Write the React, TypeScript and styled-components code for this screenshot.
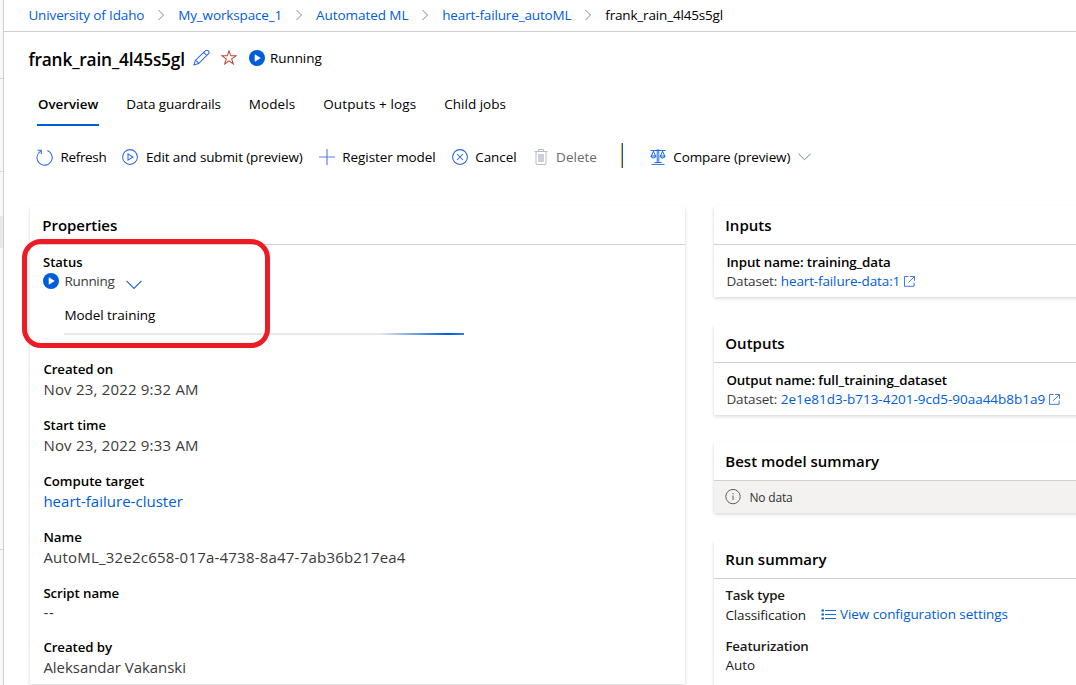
import React from "react";
import styled, { createGlobalStyle } from "styled-components";

const blue = "#015cda";

const GlobalStyle = createGlobalStyle`
  * { box-sizing: border-box; }
  html, body { margin: 0; padding: 0; background: #fff; overflow: hidden; }
  body { font-family: "Open Sans", "Noto Sans", sans-serif; font-size: 13.5px; color: #000; }
  svg { display: block; flex: none; }
  a { color: ${blue}; text-decoration: none; }
`;

const Shell = styled.div`
  display: flex;
  width: 1076px;
  height: 685px;
  overflow: hidden;
`;

const NavEdge = styled.aside`
  display: flex;
  flex-direction: column;
  flex: none;
  width: 4px;
  border-right: 1px solid #d2d0ce;
  background: #faf9f8;
`;
const NavSection = styled.div<{ $height: number }>`
  flex: none;
  height: ${(p) => p.$height}px;
  border-bottom: 1px solid #d8d6d4;
`;
const NavGap = styled.div`height: 44px; flex: none;`;
const NavSelected = styled.div`height: 32px; flex: none; background: #e9e8e7;`;
const NavRest = styled.div`height: 302px; flex: none; border-bottom: 1px solid #d8d6d4;`;

const Main = styled.main`
  flex: 1;
  min-width: 0;
  display: flex;
  flex-direction: column;
  position: relative;
`;

const Label = styled.span<{ $ls?: number }>`
  letter-spacing: ${(p) => p.$ls ?? 0}px;
  white-space: nowrap;
`;

const Breadcrumbs = styled.nav`
  display: flex;
  align-items: center;
  height: 32px;
  flex: none;
  padding: 0 0 2px 24.4px;
  border-bottom: 1px solid #d2d0ce;
`;
const Separator = styled.span`
  width: 33.8px;
  display: flex;
  justify-content: center;
`;

const TitleRow = styled.header`
  display: flex;
  align-items: center;
  height: 52px;
  flex: none;
  padding-left: 24px;
`;
const Title = styled.h1`
  margin: 3px 8.5px 0 0;
  width: 156.5px;
  font-size: 17.3px;
  line-height: 24px;
  font-weight: 600;
  letter-spacing: -0.17px;
  text-indent: 0.4px;
  white-space: nowrap;
`;
const StarSlot = styled.span`margin: 0 11.5px 0 11px;`;
const RunState = styled.span`
  display: flex;
  align-items: center;
  gap: 5.4px;
`;

const Tabs = styled.div`
  display: flex;
  gap: 28px;
  height: 42px;
  flex: none;
  padding-left: 34px;
`;
const Tab = styled.div<{ $active?: boolean }>`
  height: 42px;
  line-height: 40px;
  margin: 0 ${(p) => (p.$active ? "-1px" : 0)};
  padding: 0 ${(p) => (p.$active ? "1px" : 0)};
  font-weight: ${(p) => (p.$active ? 600 : 400)};
  font-size: ${(p) => (p.$active ? 13.3 : 13.5)}px;
  border-bottom: 2px solid ${(p) => (p.$active ? blue : "transparent")};
`;

const Toolbar = styled.div`
  display: flex;
  align-items: center;
  gap: 16.1px;
  height: 62px;
  flex: none;
  padding-left: 32px;
`;
const Command = styled.div<{ $disabled?: boolean }>`
  display: flex;
  align-items: center;
  gap: 7.5px;
  color: ${(p) => (p.$disabled ? "#6b6967" : "#000")};
`;
const Divider = styled.div`
  display: flex;
  height: 25px;
  margin: -3px 10.3px 0 8.5px;
  &::before, &::after { content: ""; width: 1px; background: #f0a850; }
  &::after { background: #12599c; }
`;

const Columns = styled.div`
  display: flex;
  gap: 29px;
  padding: 18px 0 0 26px;
`;
const Column = styled.div<{ $width: number }>`
  width: ${(p) => p.$width}px;
  flex: none;
  display: flex;
  flex-direction: column;
  gap: 27px;
`;
const Card = styled.section<{ $height?: number }>`
  height: ${(p) => (p.$height ? p.$height + "px" : "auto")};
  background: #fff;
  box-shadow: 0 1.6px 3.6px rgba(0, 0, 0, 0.16), 0 0.3px 0.9px rgba(0, 0, 0, 0.14);
`;
const CardTitle = styled.h2<{ $ls?: number; $inset?: number }>`
  margin: 0;
  height: 39px;
  padding-left: ${(p) => p.$inset ?? 11.3}px;
  font-size: 15px;
  line-height: 38px;
  font-weight: 600;
  letter-spacing: ${(p) => p.$ls ?? 0}px;
  border-bottom: 1px solid #d2d0ce;
`;
const Properties = styled.div`
  display: flex;
  flex-direction: column;
  padding: 8px 13px 0;
`;
const Name = styled.div<{ $ls?: number; $size?: number }>`
  font-size: ${(p) => p.$size ?? 13.3}px;
  line-height: 18px;
  font-weight: 600;
  letter-spacing: ${(p) => p.$ls ?? 0}px;
  white-space: nowrap;
`;
const StatusLine = styled.div`
  display: flex;
  align-items: center;
  height: 20px;
  gap: 5.4px;
  color: #3b3a39;
`;
const ExpandIcon = styled.span`margin: 8px 0 0 6.5px;`;
const Training = styled.div`
  margin: 14px 0 25px 21px;
  width: 400px;
  line-height: 20px;
  text-indent: 0.4px;
`;
const Track = styled.div`
  margin-top: 8px;
  height: 2px;
  background: linear-gradient(90deg, #e8e8e8 79%, ${blue} 96%, #3a7fe0 100%);
`;
const Field = styled.div<{ $short?: boolean }>`
  display: flex;
  flex-direction: column;
  margin-bottom: 16px;
  padding-left: 0.4px;
  > :last-child { line-height: ${(p) => (p.$short ? 20 : 22)}px; }
`;
const Value = styled.div<{ $ls?: number }>`
  font-size: 15px;
  color: #3b3a39;
  letter-spacing: ${(p) => p.$ls ?? 0}px;
  white-space: nowrap;
`;

const DataBody = styled.div`padding: 8px 0 6px 12.4px;`;
const DatasetLine = styled.div`
  display: flex;
  align-items: center;
  height: 20px;
  color: #3b3a39;
  > a { margin: 0 4.2px 0 3.6px; }
`;
const EmptyBar = styled.div`
  display: flex;
  align-items: center;
  height: 32px;
  padding-left: 11px;
  gap: 8.5px;
  background: #f3f2f1;
  color: #323130;
  font-size: 12px;
`;
const RunBody = styled.div`padding: 7px 0 0 11.4px;`;
const RunField = styled.div<{ $h: number }>`
  margin-bottom: 11px;
  color: #1b1a19;
  > :last-child {
    display: flex;
    align-items: center;
    height: ${(p) => p.$h}px;
  }
`;
const ConfigLink = styled.a`
  display: flex;
  align-items: center;
  gap: 3.6px;
  margin: -2px 0 0 15.5px;
`;

const Highlight = styled.div`
  position: absolute;
  left: 18px;
  top: 239px;
  width: 248px;
  height: 109px;
  border: 5px solid #ed1c24;
  border-radius: 19px;
`;

const Chevron = () => (
  <svg width="8" height="12" viewBox="0 0 8 12" fill="none" stroke="#8a8886">
    <path d="M1.5 1l5 5-5 5" />
  </svg>
);
const PlayFilled = () => (
  <svg width="16" height="16" viewBox="0 0 16 16">
    <circle cx="8" cy="8" r="8" fill={blue} />
    <path d="M6 4.7v6.6L11.3 8z" fill="#fff" stroke="#fff" strokeWidth=".6" strokeLinejoin="round" />
  </svg>
);
const Pencil = () => (
  <svg width="17" height="17" viewBox="0 0 17 17" fill="none" stroke="#2f6bdc" strokeWidth="1.05" strokeLinejoin="round">
    <path d="M.9 15.1l1.5-4.7L12.3 .9a2.1 2.1 0 0 1 3 3L5.6 13.6zM2.4 10.4a4 4 0 0 1 3.2 3.2M10.7 2.4l3.1 3.1" />
  </svg>
);
const Star = () => (
  <svg width="16" height="16" viewBox="0 0 16 16" fill="none" stroke="#c2453b" strokeWidth="1.05">
    <path d="M8 .9l1.7 4.9h5.2l-4.2 3.1 1.6 5L8 10.8l-4.3 3.1 1.6-5L1.1 5.8h5.2z" />
  </svg>
);
const RefreshIcon = () => (
  <svg width="17" height="17" viewBox="0 0 17 17" fill="none" stroke="#2f6bdc" strokeWidth="1.05">
    <path d="M11.4 1.5A7.6 7.6 0 1 1 4.6 2.1M1.6 1.3h3.7V5" />
  </svg>
);
const PlayOutline = () => (
  <svg width="16" height="16" viewBox="0 0 16 16" fill="none" stroke="#2f6bdc" strokeWidth="1.05">
    <circle cx="8" cy="8" r="7.4" />
    <path d="M6 4.9v6.2L11 8z" />
  </svg>
);
const Plus = () => (
  <svg width="16" height="16" viewBox="0 0 16 16" fill="none" stroke="#5b83e4" strokeWidth="1.2">
    <path d="M8 0v16M0 8h16" />
  </svg>
);
const CancelIcon = () => (
  <svg width="16" height="16" viewBox="0 0 16 16" fill="none" stroke="#2563d9" strokeWidth="1.05">
    <circle cx="8" cy="8" r="7.4" />
    <path d="M5 5l6 6M11 5l-6 6" />
  </svg>
);
const Trash = () => (
  <svg width="16" height="16" viewBox="0 0 16 16" fill="none" stroke="#bdbbb9">
    <path d="M1.5 2.5h13M5.5 2.5v-2h5v2M3 2.5v12q0 1 1 1h8q1 0 1-1v-12" />
    <path d="M5 5h6v8H5z" fill="#c9d0da" stroke="none" />
  </svg>
);
const Scales = () => (
  <svg width="16" height="16" viewBox="0 0 16 16" fill="none" stroke={blue}>
    <path d="M.5 1.5h15M7.2 .3v13M8.8 .3v13M4.5 13.5h7M1.5 15.4h13" strokeWidth=".85" />
    <path d="M3.4 2.2L1.3 7M3.4 2.2L5.5 7M12.6 2.2L10.5 7M12.6 2.2L14.7 7" strokeWidth=".9" />
    <path d="M.8 7h5.2q-.4 2-2.6 2T.8 7zM10 7h5.2q-.4 2-2.6 2T10 7z" strokeWidth=".95" />
  </svg>
);
const ChevronDown = ({ width = 13, color = "#5f84b5" }: { width?: number; color?: string }) => (
  <svg width={width} height={width * 0.6} viewBox="0 0 15 9" fill="none" stroke={color} strokeWidth="1.15">
    <path d="M.5 .8l7 7 7-7" />
  </svg>
);
const External = () => (
  <svg width="11" height="11" viewBox="0 0 11 11" fill="none" stroke="#3672dd">
    <path d="M4.5 .5H.5v9.8h9.6V6.5M6.2 .5h4.3v4.3M10.3 .7L4.3 6.7" strokeWidth=".95" />
  </svg>
);
const Info = () => (
  <svg width="16" height="16" viewBox="0 0 16 16" fill="none" stroke="#605e5c">
    <circle cx="8" cy="7.6" r="7.2" />
    <path d="M8 6.5v4.6M8 4v1.2" />
  </svg>
);
const List = () => (
  <svg width="15" height="12" viewBox="0 0 15 12" fill="none" stroke={blue}>
    <path d="M4 2.5h11M4 6.5h11M4 10.5h11" strokeWidth=".9" />
    <path d="M.5 2.5h2.4M.5 6.5h2.4M.5 10.5h2.4" strokeWidth="2" />
  </svg>
);

const crumbs = [
  { text: "University of Idaho", ls: -0.13 },
  { text: "My_workspace_1", ls: -0.13 },
  { text: "Automated ML", ls: -0.06 },
  { text: "heart-failure_autoML", ls: -0.14 },
];
const tabs = [
  { text: "Overview", ls: 0, active: true },
  { text: "Data guardrails", ls: -0.12 },
  { text: "Models", ls: 0.08 },
  { text: "Outputs + logs", ls: 0.12 },
  { text: "Child jobs", ls: 0 },
];
const commands = [
  { text: "Refresh", ls: -0.35, icon: <RefreshIcon /> },
  { text: "Edit and submit (preview)", ls: -0.12, icon: <PlayOutline /> },
  { text: "Register model", ls: -0.07, icon: <Plus /> },
  { text: "Cancel", ls: -0.08, icon: <CancelIcon /> },
  { text: "Delete", ls: 0, icon: <Trash />, disabled: true },
];

export default function App() {
  return (
    <>
      <GlobalStyle />
      <Shell>
        <NavEdge>
          <NavSection $height={79} />
          <NavSection $height={93} />
          <NavGap />
          <NavSelected />
          <NavRest />
        </NavEdge>
        <Main>
          <Breadcrumbs>
            {crumbs.map((c) => (
              <React.Fragment key={c.text}>
                <a><Label $ls={c.ls}>{c.text}</Label></a>
                <Separator><Chevron /></Separator>
              </React.Fragment>
            ))}
            <Label $ls={-0.17}>frank_rain_4l45s5gl</Label>
          </Breadcrumbs>
          <TitleRow>
            <Title>frank_rain_4l45s5gl</Title>
            <Pencil />
            <StarSlot><Star /></StarSlot>
            <RunState><PlayFilled /><Label $ls={-0.05}>Running</Label></RunState>
          </TitleRow>
          <Tabs>
            {tabs.map((t) => (
              <Tab key={t.text} $active={t.active}><Label $ls={t.ls}>{t.text}</Label></Tab>
            ))}
          </Tabs>
          <Toolbar>
            {commands.map((c) => (
              <Command key={c.text} $disabled={c.disabled}>
                {c.icon}
                <Label $ls={c.ls}>{c.text}</Label>
              </Command>
            ))}
            <Divider />
            <Command>
              <Scales />
              <Label $ls={-0.12}>Compare (preview)</Label>
              <ChevronDown />
            </Command>
          </Toolbar>
          <Columns>
            <Column $width={655}>
              <Card $height={478}>
                <CardTitle $inset={12.3} $ls={-0.05}>Properties</CardTitle>
                <Properties>
                  <Name $size={13}>Status</Name>
                  <StatusLine>
                    <PlayFilled />
                    <Label $ls={-0.3}>Running</Label>
                    <ExpandIcon><ChevronDown width={16} color="#2563d9" /></ExpandIcon>
                  </StatusLine>
                  <Training>
                    <Label $ls={-0.05}>Model training</Label>
                    <Track />
                  </Training>
                  <Field><Name $ls={-0.1}>Created on</Name><Value $ls={0.2}>Nov 23, 2022 9:32 AM</Value></Field>
                  <Field><Name $size={13}>Start time</Name><Value $ls={0.2}>Nov 23, 2022 9:33 AM</Value></Field>
                  <Field><Name $ls={-0.04}>Compute target</Name><Value $ls={0.02}><a>heart-failure-cluster</a></Value></Field>
                  <Field><Name>Name</Name><Value $ls={0.21}>AutoML_32e2c658-017a-4738-8a47-7ab36b217ea4</Value></Field>
                  <Field $short><Name $ls={-0.1}>Script name</Name><Value $ls={0.8}>--</Value></Field>
                  <Field><Name $ls={-0.1}>Created by</Name><Value $ls={-0.04}>Aleksandar Vakanski</Value></Field>
                </Properties>
              </Card>
            </Column>
            <Column $width={380}>
              <Card>
                <CardTitle>Inputs</CardTitle>
                <DataBody>
                  <Name $ls={-0.09}>Input name: training_data</Name>
                  <DatasetLine>
                    <Label $ls={-0.15}>Dataset:</Label>
                    <a><Label $ls={-0.13}>heart-failure-data:1</Label></a>
                    <External />
                  </DatasetLine>
                </DataBody>
              </Card>
              <Card>
                <CardTitle>Outputs</CardTitle>
                <DataBody>
                  <Name $ls={-0.1}>Output name: full_training_dataset</Name>
                  <DatasetLine>
                    <Label $ls={-0.15}>Dataset:</Label>
                    <a><Label $ls={-0.015}>2e1e81d3-b713-4201-9cd5-90aa44b8b1a9</Label></a>
                    <External />
                  </DatasetLine>
                </DataBody>
              </Card>
              <Card>
                <CardTitle>Best model summary</CardTitle>
                <EmptyBar><Info /><Label $ls={-0.2}>No data</Label></EmptyBar>
              </Card>
              <Card $height={170}>
                <CardTitle>Run summary</CardTitle>
                <RunBody>
                  <RunField $h={22}>
                    <Name $ls={-0.2}>Task type</Name>
                    <div>
                      <Label $ls={-0.12}>Classification</Label>
                      <ConfigLink><List /><Label $ls={-0.07}>View configuration settings</Label></ConfigLink>
                    </div>
                  </RunField>
                  <RunField $h={20}>
                    <Name $ls={-0.15}>Featurization</Name>
                    <div><Label>Auto</Label></div>
                  </RunField>
                </RunBody>
              </Card>
            </Column>
          </Columns>
          <Highlight />
        </Main>
      </Shell>
    </>
  );
}
